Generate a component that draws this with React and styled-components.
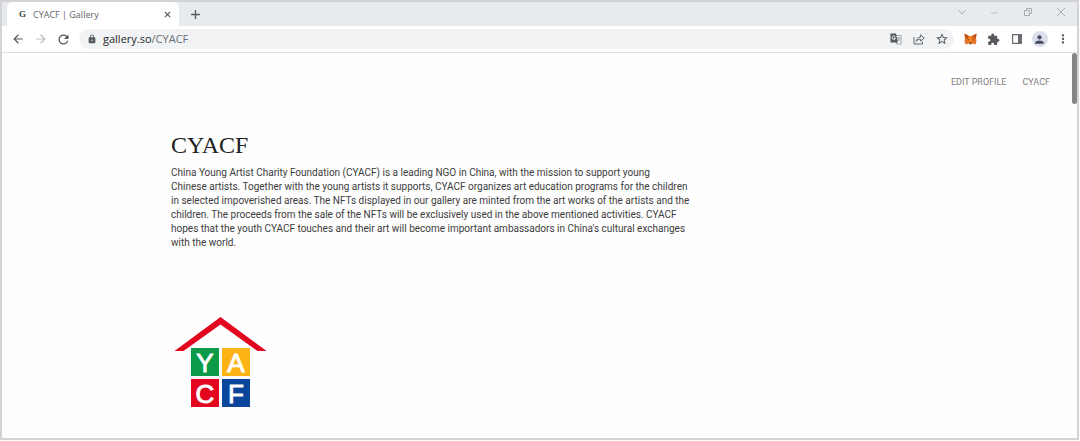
import styled, { createGlobalStyle } from 'styled-components'
import {
    MdArrowBack,
    MdArrowForward,
    MdRefresh,
    MdLock,
    MdStarBorder,
    MdExtension,
    MdPerson,
    MdMoreVert,
} from 'react-icons/md'

const GlobalStyle = createGlobalStyle`
    * {
        box-sizing: border-box;
    }

    body {
        margin: 0;
        background-color: #fdfdfd;
        font-family: Roboto, Arial, sans-serif;
    }
`

const Window = styled.div`
    display: flex;
    flex-direction: column;
    min-height: calc(100vh - 1px);
    margin-right: 1px;
    border: 2px solid #d3d3d5;
    background-color: #fefefe;
`

const TabStrip = styled.header`
    display: flex;
    align-items: stretch;
    height: 24px;
    background-color: #e7ebee;
`

const Tab = styled.div`
    display: flex;
    align-items: center;
    width: 172px;
    margin-left: 5px;
    padding: 0 6px 0 12px;
    border-radius: 6px 6px 0 0;
    background-color: #fff;
`

const Favicon = styled.span`
    width: 14px;
    font-family: "Liberation Serif", serif;
    font-size: 9px;
    font-weight: bold;
    color: #444;
`

const TabTitle = styled.span`
    flex: 1;
    font-family: "Open Sans", sans-serif;
    font-size: 9px;
    color: #5f6368;
`

const IconButton = styled.button`
    display: flex;
    align-items: center;
    justify-content: center;
    flex: none;
    width: ${props => props.$width || 23}px;
    padding: 0;
    border: 0;
    background: none;
    color: ${props => props.$color || '#55595e'};
`

const WindowControls = styled.div`
    display: flex;
    margin-left: auto;
    padding-bottom: 4px;
`

const Toolbar = styled.div`
    display: flex;
    align-items: center;
    height: 27px;
    padding: 0 3px 0 4px;
    border-bottom: 1px solid #dcdee0;
    background-color: #fff;
`

const AddressBar = styled.div`
    display: flex;
    align-items: center;
    flex: 1;
    height: 20px;
    margin: 0 5px 0 4px;
    padding: 0 1px 0 8px;
    border-radius: 10px;
    background-color: #f1f3f4;
    color: #55595e;
`

const Address = styled.div`
    flex: 1;
    margin-left: 6px;
    font-family: "Open Sans", sans-serif;
    font-size: 11px;
    line-height: 14px;
    color: #6a6e73;
`

const Host = styled.span`
    color: #26282b;
`

const Avatar = styled.span`
    display: flex;
    align-items: center;
    justify-content: center;
    width: 16px;
    height: 16px;
    border-radius: 50%;
    background-color: #dcdeea;
    color: #434a63;
`

const Page = styled.div`
    position: relative;
    flex: 1;
`

const ScrollThumb = styled.div`
    position: absolute;
    top: 0;
    right: 0;
    width: 5px;
    height: 51px;
    border-radius: 3px;
    background-color: #858585;
`

const Nav = styled.nav`
    display: flex;
    justify-content: flex-end;
    gap: 16px;
    padding: 22px 27px 0;
`

const NavLink = styled.a`
    font-size: 9px;
    line-height: 14px;
    color: #808080;
    text-decoration: none;
    text-transform: uppercase;
`

const Profile = styled.main`
    padding: 41px 169px 0;
`

const Name = styled.h1`
    margin: 0;
    font-family: "Liberation Serif", serif;
    font-size: 24px;
    font-weight: normal;
    line-height: 30px;
    color: #222;
`

const Bio = styled.p`
    max-width: 524px;
    margin: 6px 0 0;
    font-size: 10px;
    line-height: 14px;
    color: #3c3c3c;
`

const Artwork = styled.figure`
    margin: 67px 0 0 3px;
    line-height: 0;
`

const TranslateIcon = () => (
    <svg width="12" height="12" viewBox="0 0 12 12">
        <path fill="#fff" stroke="#8a8d91" strokeWidth="0.8" d="M5 2.500h6v8.500H6.500z" />
        <path fill="none" stroke="#8a8d91" strokeWidth="0.8" d="M7 5h3.200M8.600 4v1M9.600 5C9.400 6.500 8.500 7.500 7.500 8M7.600 6L9.800 8.200" />
        <path fill="currentColor" d="M0.500 0.500H6L8 9.500H0.500z" />
        <path fill="none" stroke="#fff" strokeWidth="0.9" d="M5.200 3.700A1.700 1.700 0 1 0 5.500 5H3.800" />
    </svg>
)

const ShareIcon = () => (
    <svg width="12" height="12" viewBox="0 0 12 12" fill="none" stroke="currentColor" strokeWidth="0.9">
        <path d="M1 4V11h8.500V8.500" />
        <path d="M3.200 8.400C3.600 5.600 5 4.300 7.400 4.200V1.800L11.300 5.100 7.400 8.200V6.200C5.600 6.200 4.300 6.800 3.200 8.400z" />
    </svg>
)

const FoxIcon = () => (
    <svg width="13" height="12" viewBox="0 0 26 24">
        <path fill="#e8772a" d="M1 1l9 5h6l9-5-1 9 1 6-2 7-6-2-3 2h-2l-3-2-6 2-2-7 1-6z" />
        <path fill="#c0561a" d="M1 1l9 5-2 6-6-2zM25 1l-9 5 2 6 6-2z" />
        <path fill="#f5841f" d="M10 6h6l2 6-2 7h-6l-2-7z" />
        <path fill="#3a2b25" d="M7 12l3 1v2zM19 12l-3 1v2zM11 19h4l1 2h-6z" />
        <path fill="#d7c1b3" d="M8 20l3 1v2zM18 20l-3 1v2z" />
    </svg>
)

const SidePanelIcon = () => (
    <svg width="12" height="12" viewBox="0 0 12 12">
        <path fill="none" stroke="currentColor" strokeWidth="1.200" d="M1.600 1.600h8.800v8.800H1.600z" />
        <path fill="currentColor" d="M7 1h4v10H7z" />
    </svg>
)

const LineIcon = ({ size, d, weight = 1 }) => (
    <svg width={size} height={size} viewBox="0 0 10 10" fill="none" stroke="currentColor" strokeWidth={weight}>
        <path d={d} />
    </svg>
)

const tiles = [
    { letter: 'Y', x: 16, y: 31, color: '#0a9a49' },
    { letter: 'A', x: 47, y: 31, color: '#fbb316' },
    { letter: 'C', x: 16, y: 62, color: '#e2061f' },
    { letter: 'F', x: 47, y: 62, color: '#08459b' },
]

const HouseLogo = () => (
    <svg width="94" height="91" viewBox="0 0 94 91" role="img" aria-label="YACF">
        <path fill="#e2061f" d="M46.500 0L92.500 34H83.500L46.500 7.500 9.500 34H0.500z" />
        {tiles.map(tile => (
            <g key={tile.letter}>
                <rect x={tile.x + 1} y={tile.y} width="28" height="28" fill={tile.color} />
                <text
                    x={tile.x + 15}
                    y={tile.y + 24}
                    textAnchor="middle"
                    fontFamily="Liberation Sans, sans-serif"
                    fontSize="26"
                    fill="#fff"
                    stroke="#fff"
                    strokeWidth="0.9"
                >
                    {tile.letter}
                </text>
            </g>
        ))}
    </svg>
)

function App() {
    return (
        <>
            <GlobalStyle />
            <Window>
                <TabStrip>
                    <Tab>
                        <Favicon>G</Favicon>
                        <TabTitle>CYACF | Gallery</TabTitle>
                        <IconButton $width={12} aria-label="Close tab">
                            <LineIcon size={9} weight={1.3} d="M2 2l6 6M8 2L2 8" />
                        </IconButton>
                    </Tab>
                    <IconButton $width={32} aria-label="New tab">
                        <LineIcon size={11} weight={1.2} d="M5 1v8M1 5h8" />
                    </IconButton>
                    <WindowControls>
                        <IconButton $width={33} $color="#a9adb0" aria-label="Search tabs">
                            <LineIcon size={10} d="M1.500 3L5 7l3.500-4" />
                        </IconButton>
                        <IconButton $width={33} $color="#b4b8bb" aria-label="Minimize">
                            <LineIcon size={9} d="M1 5.500h8" />
                        </IconButton>
                        <IconButton $width={33} $color="#a9adb0" aria-label="Restore">
                            <LineIcon size={10} d="M1.500 3.500h5v5h-5zM3.500 3.500v-2h5v5h-2" />
                        </IconButton>
                        <IconButton $width={33} $color="#a9adb0" aria-label="Close window">
                            <LineIcon size={10} d="M1 1l8 8M9 1L1 9" />
                        </IconButton>
                    </WindowControls>
                </TabStrip>
                <Toolbar>
                    <IconButton aria-label="Back"><MdArrowBack size={14} /></IconButton>
                    <IconButton $color="#bcbec1" aria-label="Forward"><MdArrowForward size={14} /></IconButton>
                    <IconButton aria-label="Reload"><MdRefresh size={15} /></IconButton>
                    <AddressBar>
                        <MdLock size={10} />
                        <Address><Host>gallery.so</Host>/CYACF</Address>
                        <IconButton aria-label="Translate"><TranslateIcon /></IconButton>
                        <IconButton aria-label="Share"><ShareIcon /></IconButton>
                        <IconButton aria-label="Bookmark"><MdStarBorder size={14} /></IconButton>
                    </AddressBar>
                    <IconButton aria-label="Wallet"><FoxIcon /></IconButton>
                    <IconButton aria-label="Extensions"><MdExtension size={13} /></IconButton>
                    <IconButton $color="#6a6d71" aria-label="Side panel"><SidePanelIcon /></IconButton>
                    <IconButton aria-label="Account"><Avatar><MdPerson size={13} /></Avatar></IconButton>
                    <IconButton aria-label="Menu"><MdMoreVert size={14} /></IconButton>
                </Toolbar>
                <Page>
                    <ScrollThumb />
                    <Nav>
                        <NavLink href="#edit">Edit Profile</NavLink>
                        <NavLink href="#cyacf">CYACF</NavLink>
                    </Nav>
                    <Profile>
                        <Name>CYACF</Name>
                        <Bio>
                            China Young Artist Charity Foundation (CYACF) is a leading NGO in China, with the mission to support young<br />
                            Chinese artists. Together with the young artists it supports, CYACF organizes art education programs for the children<br />
                            in selected impoverished areas. The NFTs displayed in our gallery are minted from the art works of the artists and the<br />
                            children. The proceeds from the sale of the NFTs will be exclusively used in the above mentioned activities. CYACF<br />
                            hopes that the youth CYACF touches and their art will become important ambassadors in China's cultural exchanges<br />
                            with the world.
                        </Bio>
                        <Artwork>
                            <HouseLogo />
                        </Artwork>
                    </Profile>
                </Page>
            </Window>
        </>
    )
}

export default App
